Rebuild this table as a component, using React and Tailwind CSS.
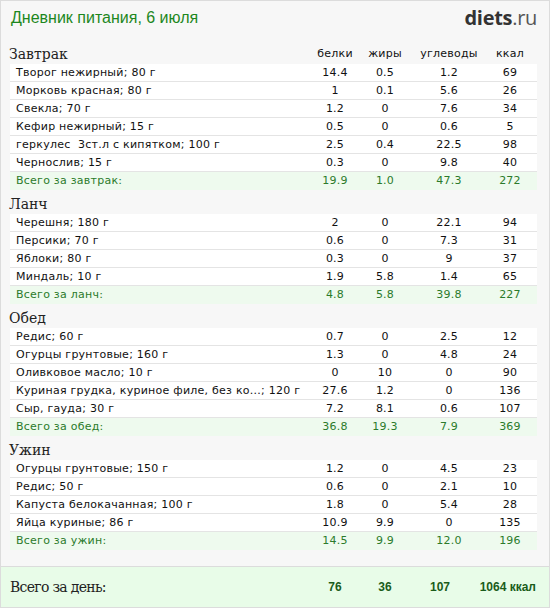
import React from 'react';

// meals of the day, each row: [name, protein, fat, carbs, kcal]
const meals = [
  {
    title: 'Завтрак',
    items: [
      ['Творог нежирный; 80 г', '14.4', '0.5', '1.2', '69'],
      ['Морковь красная; 80 г', '1', '0.1', '5.6', '26'],
      ['Свекла; 70 г', '1.2', '0', '7.6', '34'],
      ['Кефир нежирный; 15 г', '0.5', '0', '0.6', '5'],
      ['геркулес  3ст.л с кипятком; 100 г', '2.5', '0.4', '22.5', '98'],
      ['Чернослив; 15 г', '0.3', '0', '9.8', '40'],
    ],
    total: ['Всего за завтрак:', '19.9', '1.0', '47.3', '272'],
  },
  {
    title: 'Ланч',
    items: [
      ['Черешня; 180 г', '2', '0', '22.1', '94'],
      ['Персики; 70 г', '0.6', '0', '7.3', '31'],
      ['Яблоки; 80 г', '0.3', '0', '9', '37'],
      ['Миндаль; 10 г', '1.9', '5.8', '1.4', '65'],
    ],
    total: ['Всего за ланч:', '4.8', '5.8', '39.8', '227'],
  },
  {
    title: 'Обед',
    items: [
      ['Редис; 60 г', '0.7', '0', '2.5', '12'],
      ['Огурцы грунтовые; 160 г', '1.3', '0', '4.8', '24'],
      ['Оливковое масло; 10 г', '0', '10', '0', '90'],
      ['Куриная грудка, куриное филе, без ко...; 120 г', '27.6', '1.2', '0', '136'],
      ['Сыр, гауда; 30 г', '7.2', '8.1', '0.6', '107'],
    ],
    total: ['Всего за обед:', '36.8', '19.3', '7.9', '369'],
  },
  {
    title: 'Ужин',
    items: [
      ['Огурцы грунтовые; 150 г', '1.2', '0', '4.5', '23'],
      ['Редис; 50 г', '0.6', '0', '2.1', '10'],
      ['Капуста белокачанная; 100 г', '1.8', '0', '5.4', '28'],
      ['Яйца куриные; 86 г', '10.9', '9.9', '0', '135'],
    ],
    total: ['Всего за ужин:', '14.5', '9.9', '12.0', '196'],
  },
];

const cols = 'grid grid-cols-[300px_50px_50px_78px_44px] pr-[5px]';
const sans = "font-['DejaVu_Sans',Verdana,sans-serif] text-[11px] tracking-[0.25px]";
const serif = "font-['DejaVu_Serif',Georgia,serif]";

const Row = ({ row, total }) => (
  <div
    className={`${cols} h-[18px] leading-[17px] ${sans} ${
      total ? 'bg-[#eefaee] text-[#2b7a2b]' : 'bg-white text-[#111] border-b border-[#e4e4e4]'
    }`}
  >
    <div className="pl-[6px] whitespace-pre overflow-visible">{row[0]}</div>
    {row.slice(1).map((v, i) => (
      <div key={i} className="text-center">{v}</div>
    ))}
  </div>
);

const Meal = ({ meal, first }) => (
  <div>
    <div className={`${cols} h-[24px] items-end`}>
      <div className={`${serif} text-[14px] leading-[20px] text-[#222] -ml-[1px]`}>{meal.title}</div>
      {first &&
        ['белки', 'жиры', 'углеводы', 'ккал'].map((h) => (
          <div key={h} className={`${sans} text-center text-[#111] leading-[18px] pb-[1px]`}>{h}</div>
        ))}
    </div>
    {meal.items.map((r, i) => (
      <Row key={i} row={r} />
    ))}
    <Row row={meal.total} total />
  </div>
);

export default function App() {
  return (
    <div className="w-[550px] h-[608px] border border-[#dcdcdc] bg-[#f7f7f7] flex flex-col">
      <div className="h-[565px] pl-[9px] pr-[12px]">
        <div className="h-[39px] flex items-center justify-between pb-[6px]">
          <div className="font-['Liberation_Sans',Arial,sans-serif] text-[16px] text-[#1d871d] pl-[1px]">
            Дневник питания, 6 июля
          </div>
          <div className="font-['Open_Sans',sans-serif] text-[20px] text-[#333] tracking-[-0.3px]">
            <span className="font-bold">diets</span>
            <span className="text-[#555]">.ru</span>
          </div>
        </div>
        {meals.map((m, i) => (
          <Meal key={m.title} meal={m} first={i === 0} />
        ))}
      </div>
      <div className="h-[41px] border-t border-[#dcdcdc] bg-[#e8fce8] flex items-center pl-[9px] pr-[13px]">
        <div className={`${serif} text-[14px] tracking-[-0.7px] text-[#222] flex-1`}>Всего за день:</div>
        <div className="flex font-['Liberation_Sans',Arial,sans-serif] font-bold text-[12px] text-[#1a5c1a]">
          <span className="w-[50px] text-center">76</span>
          <span className="w-[50px] text-center">36</span>
          <span className="w-[60px] text-center">107</span>
          <span className="w-[66px] text-right">1064 ккал</span>
        </div>
      </div>
    </div>
  );
}
